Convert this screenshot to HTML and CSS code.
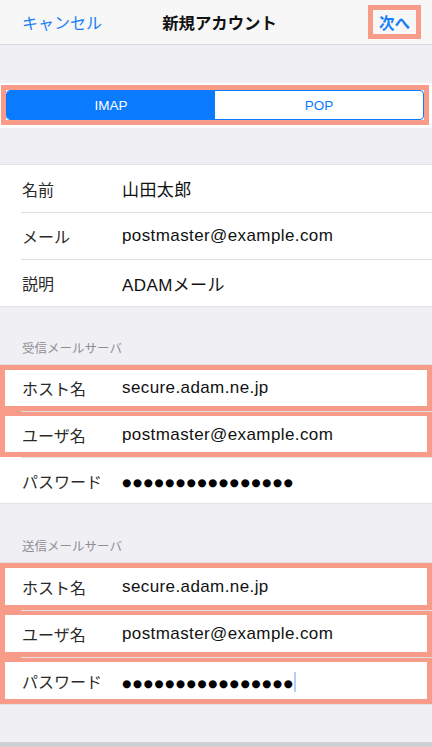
FILE: index.html
```html
<!DOCTYPE html>
<html lang="ja">
<head>
<meta charset="utf-8">
<title>新規アカウント</title>
<link rel="stylesheet" href="styles.css">
</head>
<body>
<div class="screen">
  <header class="nav">
    <span class="nav-cancel">キャンセル</span>
    <span class="nav-title">新規アカウント</span>
    <span class="nav-next">次へ</span>
  </header>

  <div class="gap gap-top"></div>

  <div class="seg-row">
    <div class="seg-frame">
      <div class="seg">
        <span class="seg-item is-active">IMAP</span>
        <span class="seg-item">POP</span>
      </div>
    </div>
  </div>

  <div class="gap gap-mid"></div>

  <section class="group group-std">
    <div class="row"><div class="row-inner"><span class="label">名前</span><span class="value">山田太郎</span></div></div>
    <div class="row"><div class="row-inner"><span class="label">メール</span><span class="value">postmaster@example.com</span></div></div>
    <div class="row"><div class="row-inner"><span class="label">説明</span><span class="value">ADAMメール</span></div></div>
  </section>

  <div class="group-header">受信メールサーバ</div>

  <section class="group group-tight">
    <div class="row is-marked"><div class="row-inner"><span class="label">ホスト名</span><span class="value">secure.adam.ne.jp</span></div></div>
    <div class="row is-marked"><div class="row-inner"><span class="label">ユーザ名</span><span class="value">postmaster@example.com</span></div></div>
    <div class="row"><div class="row-inner"><span class="label">パスワード</span><span class="value"><span class="dots">●●●●●●●●●●●●●●●●</span></span></div></div>
  </section>

  <div class="group-header group-header-2">送信メールサーバ</div>

  <section class="group group-std">
    <div class="row is-marked"><div class="row-inner"><span class="label">ホスト名</span><span class="value">secure.adam.ne.jp</span></div></div>
    <div class="row is-marked"><div class="row-inner"><span class="label">ユーザ名</span><span class="value">postmaster@example.com</span></div></div>
    <div class="row is-marked"><div class="row-inner"><span class="label">パスワード</span><span class="value"><span class="dots">●●●●●●●●●●●●●●●●</span><span class="caret"></span></span></div></div>
  </section>

  <div class="filler"></div>
  <div class="bottom-bar"></div>
</div>
</body>
</html>
```

FILE: styles.css
```css
* { box-sizing: border-box; }

html, body {
  margin: 0;
  padding: 0;
  background: #efeff4;
}

body {
  font-family: "Liberation Sans", "Noto Sans CJK JP", sans-serif;
  color: #000;
}

.screen {
  width: 432px;
  height: 747px;
  display: flex;
  flex-direction: column;
  overflow: hidden;
  background: #efeff4;
}

/* Navigation bar */
.nav {
  flex: 0 0 45px;
  height: 45px;
  background: #f7f7f7;
  border-bottom: 1px solid #d9d9dc;
  display: grid;
  grid-template-columns: 1fr auto 1fr;
  align-items: center;
  padding: 0 11px 0 22px;
}

.nav-cancel {
  justify-self: start;
  color: #1a7ff9;
  font-size: 16px;
}

.nav-title {
  font-size: 16.4px;
  font-weight: 700;
  color: #111;
  margin-left: -4px;
}

.nav-next {
  justify-self: end;
  height: 34px;
  width: 53px;
  border: 5px solid #f99b89;
  color: #1a7ff9;
  font-size: 15.5px;
  font-weight: 700;
  display: flex;
  align-items: center;
  justify-content: center;
}

.gap-top { flex: 0 0 38px; }
.gap-mid { flex: 0 0 37px; }

/* Segmented control row */
.seg-row {
  flex: 0 0 45px;
  background: #fff;
  padding: 2px 3px 0 1px;
}

.seg-frame {
  height: 40px;
  border: 5px solid #f99b89;
}

.seg {
  height: 30px;
  display: grid;
  grid-template-columns: 1fr 1fr;
  border: 1px solid #0a7aff;
  border-radius: 4px;
  overflow: hidden;
  background: #fff;
}

.seg-item {
  display: flex;
  align-items: center;
  justify-content: center;
  font-size: 13.5px;
  color: #0a7aff;
}

.seg-item.is-active {
  background: #0a7aff;
  color: #fff;
}

/* Groups */
.group {
  background: #fff;
  box-shadow: 0 -1px 0 #e2e2e6, 0 1px 0 #e2e2e6;
}

.group-std .row { height: 47px; }
.group-tight .row { height: 46px; }

.row {
  padding-left: 21px;
}

.row-inner {
  height: 100%;
  display: grid;
  grid-template-columns: 100px 1fr;
  align-items: center;
  padding-left: 1px;
}

.row + .row .row-inner {
  border-top: 1px solid #e0e0e3;
}

.row.is-marked {
  box-shadow: inset 0 0 0 5px #f99b89;
  position: relative;
}

.label {
  font-size: 16px;
  color: #2a2a2a;
}

.value {
  font-size: 17px;
  letter-spacing: 0.4px;
  color: #111;
  display: flex;
  align-items: center;
}

.dots {
  font-family: "DejaVu Sans", sans-serif;
  font-size: 10.5px;
  letter-spacing: 1.6px;
  color: #000;
  padding-top: 3px;
}

.caret {
  display: inline-block;
  width: 2px;
  height: 20px;
  background: #b5cdf4;
  margin-left: 0;
  margin-top: 2px;
}

.group-header {
  flex: 0 0 59px;
  display: flex;
  align-items: flex-end;
  padding: 0 22px 8px;
  font-size: 12.5px;
  color: #8e8e93;
}

.group-header-2 {
  flex-basis: 60px;
}

.filler { flex: 1 1 auto; }

.bottom-bar {
  flex: 0 0 5px;
  background: #cfcfd4;
}
```
